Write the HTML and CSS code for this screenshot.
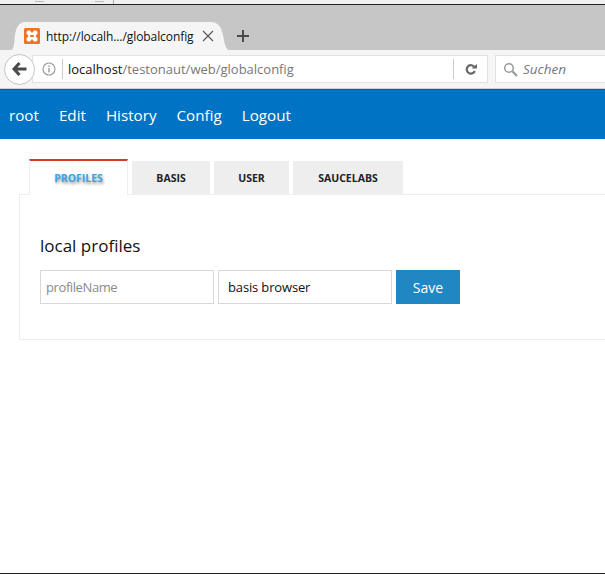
FILE: index.html
```html
<!DOCTYPE html>
<html lang="en">
<head>
  <meta charset="UTF-8">
  <title>globalconfig</title>
  <link rel="stylesheet" href="styles.css">
</head>
<body>
  <div class="desktop-strip">
    <span class="strip-mark strip-mark-a"></span>
    <span class="strip-mark strip-mark-b"></span>
    <span class="strip-tick"></span>
  </div>

  <div class="tab-strip">
    <div class="browser-tab">
      <svg class="favicon" width="16" height="16" viewBox="0 0 16 16">
        <rect width="16" height="16" rx="1.5" fill="#ec7427"/>
        <path d="M2.500 4.500Q2.500 2.500 4.500 2.500H6L8 5 10 2.500H11.500Q13.500 2.500 13.500 4.500V5.500L11.500 8 13.500 10.500V11.500Q13.500 13.500 11.500 13.500H10L8 11 6 13.500H4.500Q2.500 13.500 2.500 11.500V10.500L4.500 8 2.500 5.500z" fill="#fff"/>
        <rect x="6" y="7" width="4" height="2" rx="1" fill="#ec7427"/>
      </svg>
      <span class="browser-tab-title">http://localh.../globalconfig</span>
      <svg class="tab-close" width="12" height="12" viewBox="0 0 12 12">
        <path d="M1 1l10 10M11 1L1 11" stroke="#555" stroke-width="1.100"/>
      </svg>
    </div>
    <svg class="new-tab" width="12" height="12" viewBox="0 0 12 12">
      <path d="M6 0v12M0 6h12" stroke="#4a4a4a" stroke-width="2"/>
    </svg>
  </div>

  <div class="toolbar">
    <div class="back-btn">
      <svg width="15" height="14" viewBox="0 0 15 14">
        <path d="M7.500 1L2 7l5.500 6M3 7h11.500" fill="none" stroke="#4a4a4a" stroke-width="3"/>
      </svg>
    </div>
    <div class="url-bar">
      <svg class="info-icon" width="14" height="14" viewBox="0 0 14 14">
        <circle cx="7" cy="7" r="6" fill="none" stroke="#999" stroke-width="1.100"/>
        <path d="M7 6v4.500M7 3.500v1.400" stroke="#999" stroke-width="1.400"/>
      </svg>
      <span class="url-text"><span class="url-host">localhost</span>/testonaut/web/globalconfig</span>
      <span class="reload">
        <svg width="12" height="11" viewBox="0 0 12 11">
          <path d="M9.500 3.200A4.200 4.200 0 1 0 9.800 7" fill="none" stroke="#6a6a6a" stroke-width="2.200"/>
          <path d="M6.500 4.500H12V0z" fill="#6a6a6a"/>
        </svg>
      </span>
    </div>
    <div class="search-bar">
      <svg width="15" height="15" viewBox="0 0 15 15">
        <circle cx="6" cy="6" r="4.300" fill="none" stroke="#999" stroke-width="1.500"/>
        <path d="M9.300 9.300L14 14" stroke="#999" stroke-width="2.200"/>
      </svg>
      <span class="search-text">Suchen</span>
    </div>
  </div>

  <nav class="main-nav">
    <a>root</a>
    <a>Edit</a>
    <a>History</a>
    <a>Config</a>
    <a>Logout</a>
  </nav>

  <main class="content">
    <ul class="tabs">
      <li class="tab active">PROFILES</li>
      <li class="tab tab-basis">BASIS</li>
      <li class="tab tab-user">USER</li>
      <li class="tab tab-sauce">SAUCELABS</li>
    </ul>
    <section class="panel">
      <h2>local profiles</h2>
      <div class="profile-form">
        <input type="text" class="field field-name" placeholder="profileName">
        <input type="text" class="field" value="basis browser">
        <button class="save-btn">Save</button>
      </div>
    </section>
  </main>

  <div class="bottom-line"></div>
</body>
</html>
```

FILE: styles.css
```css
html, body {
  margin: 0;
  padding: 0;
  height: 574px;
  overflow: hidden;
}

body {
  font-family: "Open Sans", "Noto Sans", Arial, sans-serif;
  background-color: #fff;
  display: flex;
  flex-direction: column;
}

/* browser chrome */
.desktop-strip {
  height: 5px;
  box-sizing: border-box;
  background: #f0f0f0;
  border-bottom: 1px solid #222;
  display: flex;
  align-items: flex-start;
  flex-shrink: 0;
}

.strip-mark {
  height: 1px;
  width: 9px;
  margin-top: 1px;
  background: #bbb;
}

.strip-mark-a { margin-left: 35px; }
.strip-mark-b { margin-left: 51px; }

.strip-tick {
  width: 1px;
  height: 4px;
  background: #aaa;
  margin-left: 9px;
}

.tab-strip {
  height: 45px;
  background: #c6c6c6;
  display: flex;
  align-items: flex-end;
  flex-shrink: 0;
}

.browser-tab {
  width: 218px;
  height: 28px;
  margin-left: 11px;
  background: #f5f5f5;
  clip-path: path("M0 28C2 28 3 24 3.500 18C4 6 8 0 14 0H200C208 0 211 6 213 18C214 24 216 28 218 28Z");
  display: flex;
  align-items: center;
  padding-left: 13px;
  box-sizing: border-box;
}

.favicon {
  flex-shrink: 0;
}

.browser-tab-title {
  font-size: 12px;
  color: #111;
  margin-left: 6px;
  white-space: nowrap;
  letter-spacing: -0.08px;
}

.tab-close {
  margin-left: 8px;
  flex-shrink: 0;
}

.new-tab {
  margin: 0 0 8px 8px;
}

.toolbar {
  height: 39px;
  background: #f5f5f5;
  border-bottom: 1px solid #d0d0d0;
  box-sizing: border-box;
  display: flex;
  align-items: center;
  flex-shrink: 0;
}

.back-btn {
  width: 31px;
  height: 31px;
  margin-left: 4px;
  border: 1px solid #c4c4c4;
  border-radius: 50%;
  background: #fff;
  display: flex;
  align-items: center;
  justify-content: center;
  box-sizing: border-box;
  flex-shrink: 0;
  z-index: 1;
}

.url-bar {
  width: 456px;
  height: 28px;
  margin-left: -3px;
  background: #fff;
  border: 1px solid #e2e2e2;
  box-sizing: border-box;
  display: flex;
  align-items: center;
  padding-left: 9px;
  flex-shrink: 0;
}

.info-icon {
  flex-shrink: 0;
}

.url-text {
  font-size: 13px;
  color: #777;
  border-left: 1px solid #ccc;
  margin-left: 6px;
  padding-left: 5px;
  line-height: 20px;
  flex: 1;
  white-space: nowrap;
}

.url-host {
  color: #111;
}

.reload {
  width: 33px;
  height: 20px;
  border-left: 1px solid #ccc;
  display: flex;
  align-items: center;
  justify-content: center;
}

.search-bar {
  flex: 1;
  height: 28px;
  margin-left: 7px;
  background: #fff;
  border: 1px solid #e2e2e2;
  border-right: 0;
  box-sizing: border-box;
  display: flex;
  align-items: center;
  padding-left: 7px;
}

.search-text {
  font-size: 13.500px;
  font-style: italic;
  color: #777;
  margin-left: 5px;
}

/* app nav */
.main-nav {
  height: 50px;
  background: #0073c5;
  border-top: 1px solid #0b5c96;
  box-sizing: border-box;
  display: flex;
  align-items: center;
  gap: 20px;
  padding-left: 9px;
  flex-shrink: 0;
}

.main-nav a {
  color: #fff;
  font-size: 15.200px;
}

/* page content */
.content {
  padding-left: 19px;
  flex: 1;
}

.tabs {
  list-style: none;
  margin: 19px 0 0 10px;
  padding: 0;
  display: flex;
  align-items: flex-end;
  gap: 4px;
  height: 36px;
}

.tab {
  height: 33px;
  background: #eee;
  font-size: 10.500px;
  font-weight: 700;
  color: #222;
  display: flex;
  align-items: center;
  justify-content: center;
}

.tab.active {
  width: 99px;
  height: 36px;
  box-sizing: border-box;
  background: #fff;
  color: #3aa3e3;
  border-top: 2px solid #d33a2c;
  border-left: 1px solid #eee;
  border-right: 1px solid #eee;
  margin-bottom: -1px;
  text-shadow: 1px 2px 3px rgba(0, 0, 0, 0.4);
  position: relative;
}

.tab-basis { width: 78px; }
.tab-user { width: 75px; }
.tab-sauce { width: 110px; }

.panel {
  border: 1px solid #eee;
  border-right: 0;
  height: 146px;
  box-sizing: border-box;
  padding: 39px 0 0 20px;
}

.panel h2 {
  margin: 0 0 12px;
  font-size: 17px;
  font-weight: 400;
  line-height: 24px;
  color: #111;
}

.profile-form {
  display: flex;
  gap: 4px;
}

.field {
  width: 174px;
  height: 34px;
  box-sizing: border-box;
  border: 1px solid #d8d8d8;
  padding: 0 9px;
  font-family: inherit;
  font-size: 13px;
  letter-spacing: -0.15px;
  color: #111;
  outline: none;
}

.field-name {
  padding-left: 5px;
}

.field::placeholder {
  color: #8a8a8a;
  letter-spacing: -0.4px;
}

.save-btn {
  width: 64px;
  height: 34px;
  border: none;
  background: #2087c2;
  color: #fff;
  font-family: inherit;
  font-size: 14px;
  cursor: pointer;
}

.bottom-line {
  height: 1px;
  background: #222;
  flex-shrink: 0;
}
```
